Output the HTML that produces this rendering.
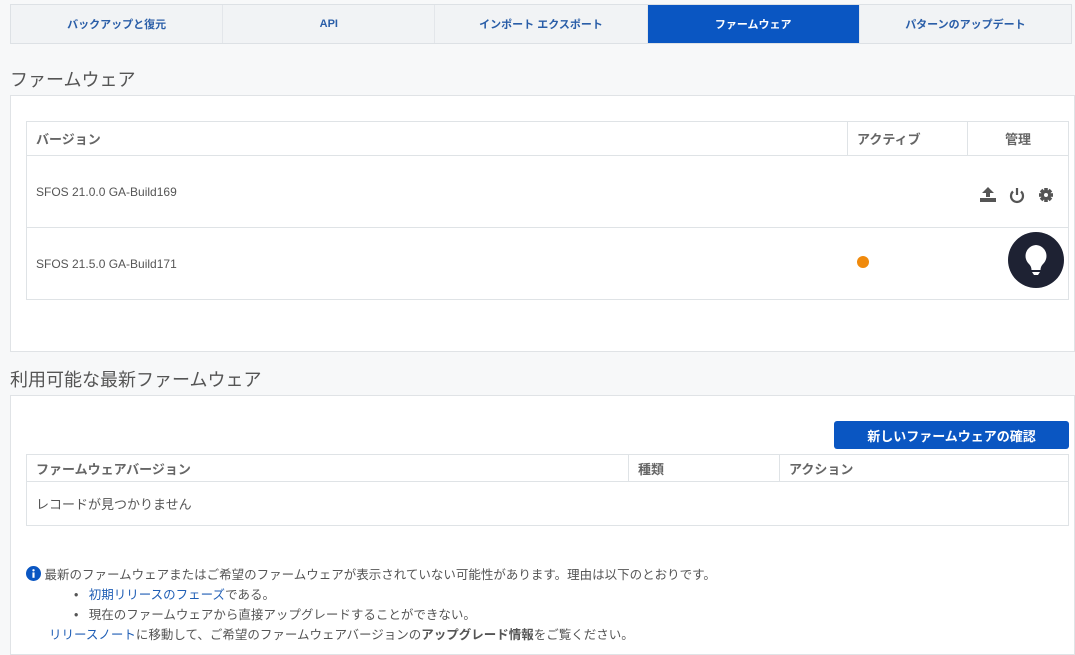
<!DOCTYPE html>
<html><head><meta charset="utf-8"><style>
*{box-sizing:border-box;margin:0;padding:0}
body{width:1075px;height:643px;overflow:hidden;background:#f7f8f9;font-family:"Liberation Sans","Noto Sans CJK JP",sans-serif;color:#444;position:relative}
.tabs{position:absolute;left:10px;top:4px;width:1062px;height:40px;display:flex;border:1px solid #dde1e5;background:#f1f3f5}
.tabs div{flex:1;display:flex;align-items:center;justify-content:center;font-size:11px;color:#2a5ea8;border-right:1px solid #e3e6ea;font-weight:bold}
.tabs div.on{background:#0a56c2;color:#fff}
h2{position:absolute;left:10px;font-size:18px;font-weight:normal;color:#555}
.panel{position:absolute;left:10px;width:1065px;background:#fff;border:1px solid #e0e3e6}
table{border-collapse:collapse;position:absolute;font-size:12px}
td,th{border:1px solid #dfe3e6;text-align:left;padding-left:9px;font-weight:normal;color:#555}
th{font-size:13px;font-weight:bold;color:#666}
.dot{width:12px;height:12px;border-radius:50%;background:#f08a0c;display:inline-block}
.bulb{position:absolute;left:1008px;top:232px;width:56px;height:56px;border-radius:50%;background:#1e2233}
.btn{position:absolute;left:834px;top:421px;width:235px;height:28px;background:#0a56c2;color:#fff;border-radius:3px;font-size:13px;font-weight:bold;display:flex;align-items:center;justify-content:center}
.note{position:absolute;font-size:12.5px;color:#555;white-space:nowrap}
a{color:#1f5eb5;text-decoration:none}
</style></head><body>
<div class="tabs"><div>バックアップと復元</div><div>API</div><div>インポート エクスポート</div><div class="on">ファームウェア</div><div style="border:none">パターンのアップデート</div></div>
<h2 style="top:66px">ファームウェア</h2>
<div class="panel" style="top:95px;height:257px"></div>
<table style="left:26px;top:121px;width:1043px">
<tr style="height:34px"><th>バージョン</th><th style="width:120px">アクティブ</th><th style="width:101px;text-align:center;padding:0">管理</th></tr>
<tr style="height:72px"><td colspan="2" style="border-right:none">SFOS 21.0.0 GA-Build169</td><td style="border-left:none"></td></tr>
<tr style="height:72px"><td style="border-right:none">SFOS 21.5.0 GA-Build171</td><td style="border-left:none;border-right:none"><span class="dot"></span></td><td style="border-left:none"></td></tr>
</table>
<svg style="position:absolute;left:978px;top:186px" width="80" height="18" viewBox="0 0 80 18"><path d="M10 1l-6 6h4v4h4V7h4zM2 12h16v4H2z" fill="#555"/><g transform="translate(31 1)" fill="none" stroke="#555" stroke-width="2.2"><path d="M4 4.5a6 6 0 1 0 8 0"/><path d="M8 1v7"/></g><g transform="translate(68 9)" fill="#555"><circle r="5"/><rect x="-1.8" y="-7" width="3.6" height="14"/><rect x="-7" y="-1.8" width="14" height="3.6"/><rect x="-1.8" y="-7" width="3.6" height="14" transform="rotate(45)"/><rect x="-1.8" y="-7" width="3.6" height="14" transform="rotate(-45)"/><circle r="2" fill="#fff"/></g></svg>
<div class="bulb"><svg width="56" height="56" viewBox="0 0 56 56"><path d="M28 13a11 11 0 0 0-7 19c1.5 1.5 2.5 3.5 2.5 6h9c0-2.5 1-4.5 2.5-6a11 11 0 0 0-7-19z" fill="#fff"/><path d="M24 40h8l-2 3h-4z" fill="#fff"/></svg></div>
<h2 style="top:366px">利用可能な最新ファームウェア</h2>
<div class="panel" style="top:395px;height:260px"></div>
<div class="btn">新しいファームウェアの確認</div>
<table style="left:26px;top:454px;width:1043px">
<tr style="height:27px"><th>ファームウェアバージョン</th><th style="width:151px">種類</th><th style="width:289px">アクション</th></tr>
<tr style="height:44px"><td colspan="3" style="font-size:13px">レコードが見つかりません</td></tr>
</table>
<div class="note" style="left:26px;top:564px"><svg width="15" height="15" viewBox="0 0 14 14" style="vertical-align:-2px"><circle cx="7" cy="7" r="7" fill="#0a56c2"/><rect x="6" y="6" width="2" height="5" fill="#fff"/><circle cx="7" cy="4" r="1.1" fill="#fff"/></svg> 最新のファームウェアまたはご希望のファームウェアが表示されていない可能性があります。理由は以下のとおりです。</div>
<div class="note" style="left:74px;top:584px">• &nbsp;&nbsp;<a>初期リリースのフェーズ</a>である。</div>
<div class="note" style="left:74px;top:604px">• &nbsp;&nbsp;現在のファームウェアから直接アップグレードすることができない。</div>
<div class="note" style="left:49px;top:624px"><a>リリースノート</a>に移動して、ご希望のファームウェアバージョンの<b>アップグレード情報</b>をご覧ください。</div>
</body></html>
